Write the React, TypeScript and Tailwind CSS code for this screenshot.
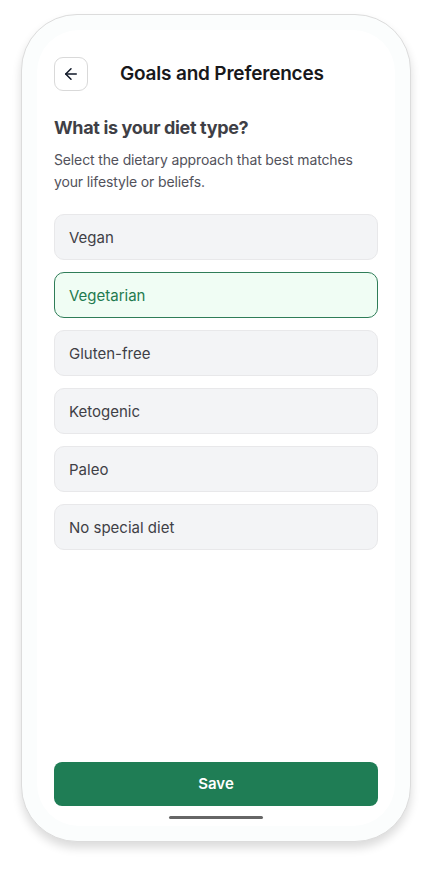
import { useState } from 'react';
import { ArrowLeft } from 'lucide-react';

const diets = ['Vegan', 'Vegetarian', 'Gluten-free', 'Ketogenic', 'Paleo', 'No special diet'];

export default function App() {
  const [selected, setSelected] = useState('Vegetarian');

  return (
    <div className="min-h-[872px] w-[432px] bg-white pl-[21px] pt-[14px] font-['Inter',sans-serif]">
      <div className="h-[828px] w-[390px] rounded-[56px] border border-[#dcdcdc] bg-[#fbfdfd] p-[15px] shadow-[0_6px_10px_rgba(0,0,0,0.14)]">
        <div className="flex h-[796px] flex-col rounded-[42px] bg-white px-[17px] pt-[27px] pb-[2px]">
          <div className="flex items-center">
            <button
              type="button"
              className="flex h-[34px] w-[34px] items-center justify-center rounded-[9px] border border-[#d9d9d9] bg-white text-gray-900"
            >
              <ArrowLeft className="h-[18px] w-[18px]" strokeWidth={2} />
            </button>
            <h1 className="ml-[32px] text-[19px] font-semibold tracking-[-0.01em] text-[#18181b]">Goals and Preferences</h1>
          </div>

          <h2 className="mt-[23px] text-[18px] leading-[28px] font-bold tracking-[-0.02em] text-[#3f3f46]">What is your diet type?</h2>
          <p className="mt-[7px] text-[14px] leading-[22px] tracking-[-0.01em] text-[#52525b]">
            Select the dietary approach that best matches your lifestyle or beliefs.
          </p>

          <div className="mt-[21px] flex flex-col gap-[12px]">
            {diets.map((diet) => {
              const active = diet === selected;
              return (
                <button
                  key={diet}
                  type="button"
                  onClick={() => setSelected(diet)}
                  className={
                    active
                      ? 'flex h-[46px] items-center rounded-[10px] border-[1.5px] border-[#2f7d58] bg-[#f0fdf4] px-[14px] pt-[2px] text-left text-[15px] text-[#1f7a4f]'
                      : 'flex h-[46px] items-center rounded-[10px] border border-[#e8e8ea] bg-[#f3f4f6] px-[14px] pt-[2px] text-left text-[15px] text-[#3f3f46]'
                  }
                >
                  {diet}
                </button>
              );
            })}
          </div>

          <div className="flex-1" />

          <button
            type="button"
            className="h-[44px] w-full rounded-[8px] bg-[#1f7d55] text-[15px] font-semibold text-white"
          >
            Save
          </button>
          <div className="mt-[10px] flex justify-center">
            <div className="h-[3px] w-[94px] rounded-full bg-[#666666]" />
          </div>
          <div className="h-[5px]" />
        </div>
      </div>
    </div>
  );
}
